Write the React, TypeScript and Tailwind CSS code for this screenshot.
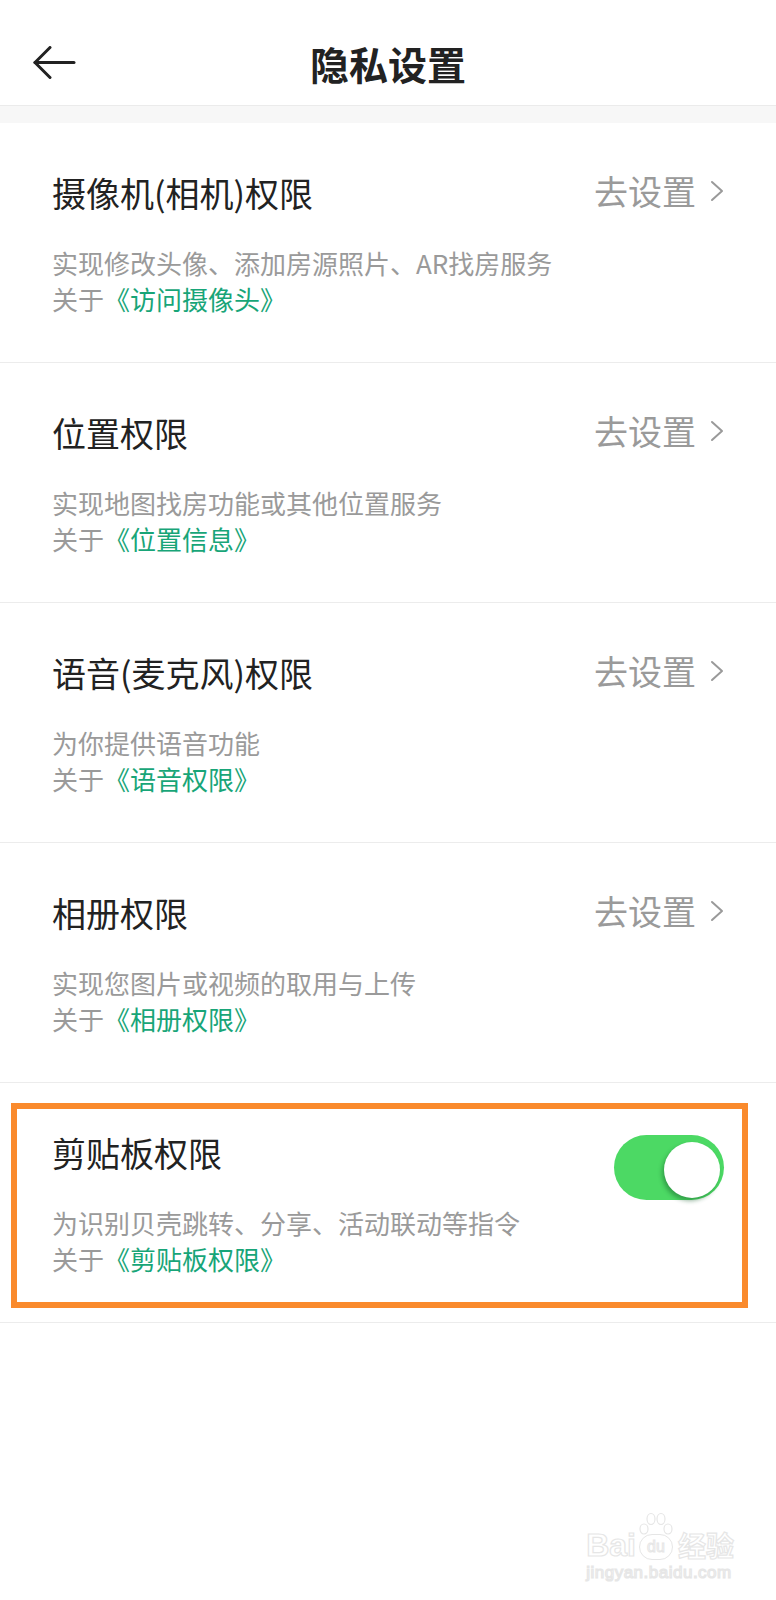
import { ReactNode } from "react";

type Perm = {
  title: string;
  desc: string;
  link: string;
  toggle?: boolean;
};

const perms: Perm[] = [
  { title: "摄像机(相机)权限", desc: "实现修改头像、添加房源照片、AR找房服务", link: "访问摄像头" },
  { title: "位置权限", desc: "实现地图找房功能或其他位置服务", link: "位置信息" },
  { title: "语音(麦克风)权限", desc: "为你提供语音功能", link: "语音权限" },
  { title: "相册权限", desc: "实现您图片或视频的取用与上传", link: "相册权限" },
  { title: "剪贴板权限", desc: "为识别贝壳跳转、分享、活动联动等指令", link: "剪贴板权限", toggle: true },
];

function BackArrow() {
  return (
    <svg width="44" height="34" viewBox="0 0 44 34" fill="none" stroke="#222" strokeWidth="3" strokeLinecap="round" strokeLinejoin="round">
      <path d="M42 16.5H3" />
      <path d="M18 1.5L3 16.5L18 31.5" />
    </svg>
  );
}

function Chevron() {
  return (
    <svg width="14" height="22" viewBox="0 0 14 22" fill="none" stroke="#9a9a9a" strokeWidth="2" strokeLinecap="round" strokeLinejoin="round">
      <path d="M2 2L12 11L2 20" />
    </svg>
  );
}

function Toggle() {
  return (
    <div className="relative w-[110px] h-[65px] mt-[2px] -mb-[27px] rounded-full bg-[#4cd964]">
      <div className="absolute right-[4px] top-[7px] w-[56px] h-[56px] rounded-full bg-white shadow-[-2px_3px_4px_rgba(20,90,40,0.45)]" />
    </div>
  );
}

function Row({ perm }: { perm: Perm }) {
  let right: ReactNode = (
    <div className="flex items-center gap-[14px] h-[40px] -mt-[2px]">
      <span className="text-[34px] leading-[40px] text-[#9a9a9a]">去设置</span>
      <Chevron />
    </div>
  );
  if (perm.toggle) right = <Toggle />;

  return (
    <div className="relative border-b border-[#ececec] px-[52px] pt-[50px] pb-[45px]">
      <div className="flex items-start justify-between">
        <div className="text-[34px] leading-[40px] text-[#222]">{perm.title}</div>
        {right}
      </div>
      <div className="mt-[32px] text-[26px] leading-[36px] text-[#9a9a9a]">{perm.desc}</div>
      <div className="text-[26px] leading-[36px] text-[#9a9a9a]">
        关于<span className="text-[#18a578]">《{perm.link}》</span>
      </div>

      {perm.toggle && (
        <div className="absolute left-[11px] right-[28px] top-[20px] bottom-[14px] border-[6px] border-[#fa8a2c]" />
      )}
    </div>
  );
}

function Watermark() {
  const outline = "text-transparent [-webkit-text-stroke:1.2px_#e6e6e6]";
  return (
    <div className="flex flex-col items-start">
      <div className="flex items-end">
        <span className={"font-['Liberation_Sans',sans-serif] font-bold text-[32px] leading-[30px] " + outline}>Bai</span>
        <div className="relative w-[40px] h-[48px] flex items-end justify-center">
          <svg className="absolute top-0 left-0" width="40" height="30" viewBox="0 0 40 30" fill="none" stroke="#e6e6e6" strokeWidth="1.2">
            <ellipse cx="8" cy="17" rx="4" ry="5" />
            <ellipse cx="15" cy="7" rx="4" ry="5.5" />
            <ellipse cx="25" cy="7" rx="4" ry="5.5" />
            <ellipse cx="32" cy="17" rx="4" ry="5" />
          </svg>
          <span className="w-[34px] h-[26px] rounded-full border-[1.2px] border-[#e6e6e6] flex items-center justify-center font-['Liberation_Sans',sans-serif] text-[16px] leading-none text-transparent [-webkit-text-stroke:1px_#e6e6e6]">
            du
          </span>
        </div>
        <span className={"ml-[2px] font-['Noto_Sans_CJK_SC',sans-serif] font-bold text-[28px] leading-[30px] " + outline}>经验</span>
      </div>
      <div className={"mt-[4px] font-['Liberation_Sans',sans-serif] text-[17px] leading-[18px] tracking-[0.5px] " + outline}>
        jingyan.baidu.com
      </div>
    </div>
  );
}

export default function App() {
  return (
    <div className="w-[776px] min-h-[1600px] flex flex-col bg-white font-['Noto_Sans_CJK_SC','Noto_Sans',sans-serif]">
      <div className="h-[105px] pt-[20px] grid grid-cols-[1fr_auto_1fr] items-center">
        <div className="pl-[32px] flex items-center">
          <BackArrow />
        </div>
        <div className="text-[39px] leading-[48px] font-bold text-[#222]">隐私设置</div>
        <div />
      </div>
      <div className="h-[18px] bg-[#f7f7f7] border-t border-[#ebebeb]" />

      {perms.map((p, i) => (
        <Row key={i} perm={p} />
      ))}

      <div className="flex-1 flex items-end justify-end pr-[42px] pb-[18px]">
        <Watermark />
      </div>
    </div>
  );
}
